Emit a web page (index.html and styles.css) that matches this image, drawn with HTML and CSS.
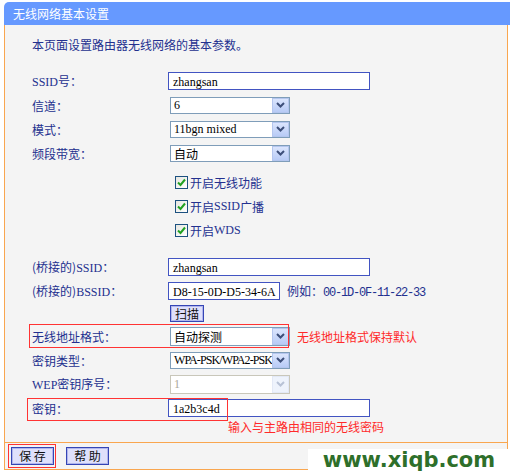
FILE: index.html
```html
<!DOCTYPE html>
<html lang="zh-CN">
<head>
    <meta charset="UTF-8">
    <title>无线网络基本设置</title>
    <link rel="stylesheet" href="styles.css">
</head>
<body>
    <div class="panel">
        <div class="panel-title">无线网络基本设置</div>
        <div class="panel-body">
            <div class="form">
                <p class="intro">本页面设置路由器无线网络的基本参数。</p>

                <div class="row">
                    <span class="lbl"><span class="en">SSID</span>号：</span>
                    <div class="input wide"><span class="en">zhangsan</span></div>
                </div>
                <div class="row">
                    <span class="lbl">信道：</span>
                    <div class="select"><span class="val en">6</span><span class="arrow"><svg width="11" height="8" viewBox="0 0 11 8"><path d="M2 2 L5.5 5.5 L9 2" fill="none" stroke="#3d4f7a" stroke-width="2"/></svg></span></div>
                </div>
                <div class="row">
                    <span class="lbl">模式：</span>
                    <div class="select"><span class="val en">11bgn mixed</span><span class="arrow"><svg width="11" height="8" viewBox="0 0 11 8"><path d="M2 2 L5.5 5.5 L9 2" fill="none" stroke="#3d4f7a" stroke-width="2"/></svg></span></div>
                </div>
                <div class="row">
                    <span class="lbl">频段带宽：</span>
                    <div class="select"><span class="val">自动</span><span class="arrow"><svg width="11" height="8" viewBox="0 0 11 8"><path d="M2 2 L5.5 5.5 L9 2" fill="none" stroke="#3d4f7a" stroke-width="2"/></svg></span></div>
                </div>

                <div class="row check-row first">
                    <span class="cb"><svg width="11" height="11" viewBox="0 0 11 11"><path d="M2 5.5 L4.5 8 L9 2.5" fill="none" stroke="#21a121" stroke-width="2"/></svg></span>开启无线功能
                </div>
                <div class="row check-row">
                    <span class="cb"><svg width="11" height="11" viewBox="0 0 11 11"><path d="M2 5.5 L4.5 8 L9 2.5" fill="none" stroke="#21a121" stroke-width="2"/></svg></span>开启<span class="en">SSID</span>广播
                </div>
                <div class="row check-row">
                    <span class="cb"><svg width="11" height="11" viewBox="0 0 11 11"><path d="M2 5.5 L4.5 8 L9 2.5" fill="none" stroke="#21a121" stroke-width="2"/></svg></span>开启<span class="en">WDS</span>
                </div>

                <div class="row bridge">
                    <span class="lbl">(桥接的)<span class="en">SSID</span>：</span>
                    <div class="input wide"><span class="en">zhangsan</span></div>
                </div>
                <div class="row">
                    <span class="lbl">(桥接的)<span class="en">BSSID</span>：</span>
                    <div class="input short"><span class="en">D8-15-0D-D5-34-6A</span></div>
                    <span class="hint">例如：<span class="en">00-1D-0F-11-22-33</span></span>
                </div>
                <div class="row scan-row">
                    <button class="btn scan">扫描</button>
                </div>

                <div class="row">
                    <span class="mark mark-format"></span>
                    <span class="lbl">无线地址格式：</span>
                    <div class="select tall"><span class="val">自动探测</span><span class="arrow"><svg width="11" height="8" viewBox="0 0 11 8"><path d="M2 2 L5.5 5.5 L9 2" fill="none" stroke="#3d4f7a" stroke-width="2"/></svg></span></div>
                    <span class="note">无线地址格式保持默认</span>
                </div>
                <div class="row">
                    <span class="lbl">密钥类型：</span>
                    <div class="select"><span class="val en tight">WPA-PSK/WPA2-PSK</span><span class="arrow"><svg width="11" height="8" viewBox="0 0 11 8"><path d="M2 2 L5.5 5.5 L9 2" fill="none" stroke="#3d4f7a" stroke-width="2"/></svg></span></div>
                </div>
                <div class="row">
                    <span class="lbl"><span class="en">WEP</span>密钥序号：</span>
                    <div class="select tall disabled"><span class="val en">1</span><span class="arrow"><svg width="11" height="8" viewBox="0 0 11 8"><path d="M2 2 L5.5 5.5 L9 2" fill="none" stroke="#b8c2d6" stroke-width="2"/></svg></span></div>
                </div>
                <div class="row">
                    <span class="lbl">密钥：</span>
                    <div class="input wide"><span class="en">1a2b3c4d</span></div>
                    <span class="mark mark-key"></span>
                </div>
                <div class="row note-row">
                    <span class="note">输入与主路由相同的无线密码</span>
                </div>
            </div>

            <div class="foot">
                <span class="btn-wrap">
                    <button class="btn">保 存</button>
                    <span class="mark mark-save"></span>
                </span>
                <button class="btn">帮 助</button>
            </div>
        </div>
    </div>

    <div class="watermark">www.xiqb.com</div>
</body>
</html>
```

FILE: styles.css
```css
body {
    margin: 0;
    background: #fff;
    font-family: "Noto Sans CJK SC", sans-serif;
    font-size: 12px;
    color: #23308f;
    position: relative;
    height: 472px;
    overflow: hidden;
}

.en {
    font-family: "Liberation Serif", serif;
    font-size: 12px;
}

.en.tight {
    letter-spacing: -0.9px;
}

.hint .en {
    font-family: "Liberation Mono", monospace;
    letter-spacing: -1.2px;
}

.panel {
    margin: 2px 0 0 4px;
    width: 506px;
}

.panel-title {
    height: 23px;
    line-height: 23px;
    background: #6699ff;
    color: #fff;
    padding-left: 9px;
    border-top-left-radius: 5px;
}

.panel-body {
    width: 502px;
    background: #f4f4f4;
    border: 1px solid #f9a64f;
    border-top: 0;
}

.form {
    padding: 12px 0 10px 27px;
}

.intro {
    margin: 0 0 16px;
    line-height: 16px;
}

.row {
    display: flex;
    align-items: center;
    height: 24px;
    position: relative;
    white-space: nowrap;
}

.lbl {
    width: 136px;
    flex: none;
}

.input {
    height: 18px;
    box-sizing: border-box;
    border: 1px solid #4254c2;
    background: #fff;
    color: #000;
    line-height: 16px;
    padding-left: 4px;
    overflow: hidden;
}

.input.wide {
    width: 202px;
}

.input.short {
    width: 112px;
}

.hint {
    margin-left: 7px;
}

.select {
    margin-left: 2px;
    width: 120px;
    height: 17px;
    box-sizing: border-box;
    border: 1px solid #7f9db9;
    background: #fff;
    color: #000;
    display: flex;
    overflow: hidden;
}

.select.tall {
    height: 19px;
}

.select .val {
    flex: 1;
    padding-left: 3px;
    line-height: 15px;
    overflow: hidden;
}

.select.tall .val {
    line-height: 17px;
}

.select .arrow {
    width: 17px;
    flex: none;
    box-sizing: border-box;
    border: 1px solid #b4c6ee;
    background: linear-gradient(#dbe5fd, #b8cbf6);
    display: flex;
    align-items: center;
    justify-content: center;
}

.select.disabled {
    border-color: #c9c7ba;
    color: #aca899;
}

.select.disabled .arrow {
    border-color: #e3e9f6;
    background: #eef3fc;
}

.check-row {
    padding-left: 143px;
}

.check-row.first {
    margin-top: 5px;
}

.cb {
    width: 13px;
    height: 13px;
    box-sizing: border-box;
    border: 1px solid #1c5180;
    background: linear-gradient(135deg, #e6e6e0, #fff);
    display: flex;
    align-items: center;
    justify-content: center;
    margin-right: 2px;
}

.bridge {
    margin-top: 13px;
}

.scan-row {
    height: 21px;
    padding-left: 138px;
}

.btn {
    font-family: "Noto Sans CJK SC", sans-serif;
    font-size: 12px;
    color: #111;
    background: #dfe0fb;
    border: 1px solid #3545b5;
    box-shadow: inset 0 0 0 1px #b0b6ec;
    height: 18px;
    line-height: 14px;
    padding: 0 6px;
    margin: 0;
}

.btn.scan {
    height: 17px;
    padding: 0 3px;
    width: 34px;
}

.note {
    color: #ff2a2a;
    margin-left: 7px;
}

.note-row {
    height: 12px;
    padding-left: 189px;
}

.mark {
    position: absolute;
    border: 1px solid #f33;
    box-sizing: border-box;
}

.mark-format {
    left: -3px;
    top: 0;
    width: 260px;
    height: 24px;
}

.mark-key {
    left: -5px;
    top: 2px;
    width: 201px;
    height: 23px;
}

.foot {
    border-top: 1px solid #f9a64f;
    height: 26px;
    display: flex;
    align-items: center;
    padding-left: 6px;
}

.foot .btn {
    width: 43px;
    margin-right: 12px;
}

.btn-wrap {
    position: relative;
    display: inline-flex;
}

.mark-save {
    left: -3px;
    top: -3px;
    width: 48px;
    height: 24px;
}

.watermark {
    position: absolute;
    right: 0;
    bottom: 0;
    width: 202px;
    height: 23px;
    background: #fff;
    color: #2e6f2a;
    font-family: "DejaVu Sans", sans-serif;
    font-weight: bold;
    font-size: 21px;
    line-height: 23px;
    text-align: center;
}
```
